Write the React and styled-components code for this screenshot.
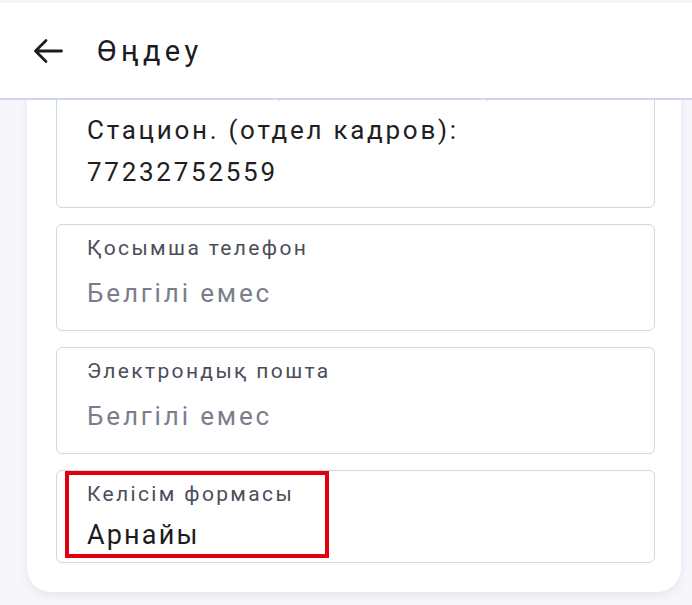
import React from 'react';
import { styled, createGlobalStyle } from 'styled-components';

const GlobalStyle = createGlobalStyle`
  * { box-sizing: border-box; }
  body {
    margin: 0;
    background: #f7f6fb;
    font-family: Roboto, "Noto Sans", sans-serif;
  }
`;

const fields = [
  { label: 'Қосымша телефон', value: 'Белгілі емес', empty: true },
  { label: 'Электрондық пошта', value: 'Белгілі емес', empty: true },
];

const BackIcon = () => (
  <svg width="30" height="26" viewBox="0 0 30 26" fill="none">
    <path d="M28.5 13H3M13 2.5 2.5 13 13 23.5" stroke="#1d1d20" strokeWidth="2.8" strokeLinecap="round" strokeLinejoin="round" />
  </svg>
);

const App = () => {
  return (
    <Screen>
      <GlobalStyle />
      <Header>
        <BackButton>
          <BackIcon />
        </BackButton>
        <TitleH>Өңдеу</TitleH>
      </Header>
      <Viewport>
        <Card>
          <Field>
            <LabelP>Байланыс телефоны</LabelP>
            <MultiValue>
              {'Мобил.: 87013334455,\n77232752558, 87015553322,\nСтацион. (отдел кадров):\n77232752559'}
            </MultiValue>
          </Field>
          {fields.map((f) => (
            <Field key={f.label}>
              <LabelP>{f.label}</LabelP>
              <ValueP $empty={f.empty}>{f.value}</ValueP>
            </Field>
          ))}
          <Field>
            <LabelP>Келісім формасы</LabelP>
            <SelectValue>Арнайы</SelectValue>
            <Highlight />
          </Field>
        </Card>
      </Viewport>
    </Screen>
  );
};

export default App;

const Screen = styled.div`
  width: 692px;
  height: 605px;
  display: flex;
  flex-direction: column;
  overflow: hidden;
`;

const Header = styled.header`
  height: 100px;
  flex-shrink: 0;
  display: flex;
  align-items: center;
  gap: 34px;
  padding: 0 0 0 33px;
  background: #ffffff;
  border-top: 3px solid #f6f6f8;
  border-bottom: 2px solid #cdd6f8;
  position: relative;
  z-index: 1;
`;

const BackButton = styled.button`
  display: flex;
  align-items: center;
  justify-content: center;
  padding: 0;
  border: none;
  background: transparent;
`;

const TitleH = styled.h1`
  margin: 0;
  font-size: 29px;
  font-weight: 400;
  letter-spacing: 0.15em;
  color: #1b1b1f;
`;

const Viewport = styled.main`
  flex: 1;
  overflow: hidden;
  padding: 0 11px 0 27px;
`;

const Card = styled.section`
  margin-top: -152px;
  display: flex;
  flex-direction: column;
  gap: 16px;
  padding: 28px 26px 29px 29px;
  background: #ffffff;
  border-radius: 24px;
  box-shadow: 0 3px 10px rgba(60, 60, 100, 0.09);
`;

const Field = styled.div`
  position: relative;
  border: 1px solid #d2d5e3;
  border-radius: 6px;
  padding: 9px 30px 16px 30px;
`;

const LabelP = styled.p`
  margin: 0;
  font-size: 21px;
  line-height: 28px;
  letter-spacing: 0.112em;
  color: #4b4e5a;
`;

const ValueP = styled.p`
  margin: 11px 0 0;
  font-size: 26px;
  line-height: 41px;
  letter-spacing: 0.11em;
  color: ${({ $empty }) => ($empty ? '#7a7e8c' : '#1e1e23')};
`;

const MultiValue = styled(ValueP)`
  white-space: pre-line;
  line-height: 42px;
  letter-spacing: 0.105em;
  margin-bottom: -2px;
`;

const SelectValue = styled.p`
  margin: 12px 0 -4px;
  font-size: 27px;
  line-height: 30px;
  letter-spacing: 0.08em;
  color: #1c1c21;
`;

const Highlight = styled.div`
  position: absolute;
  left: 8px;
  top: 0;
  width: 264px;
  height: 87px;
  border: 4px solid #e3000e;
  pointer-events: none;
`;
